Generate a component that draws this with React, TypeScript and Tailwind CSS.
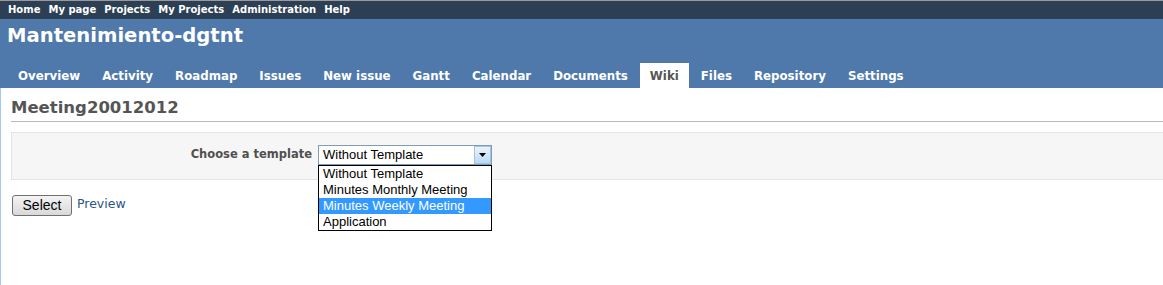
const topMenu = ["Home", "My page", "Projects", "My Projects", "Administration", "Help"];

const tabs = [
  "Overview",
  "Activity",
  "Roadmap",
  "Issues",
  "New issue",
  "Gantt",
  "Calendar",
  "Documents",
  "Wiki",
  "Files",
  "Repository",
  "Settings",
];

const templates = [
  "Without Template",
  "Minutes Monthly Meeting",
  "Minutes Weekly Meeting",
  "Application",
];

export default function App() {
  return (
    <div className="h-[285px] w-full overflow-hidden bg-white font-['DejaVu_Sans',sans-serif]">
      {/* top menu */}
      <div className="h-[19px] border-t border-[#9a9a9a] bg-[#2c3f54]">
        <div className="flex gap-[8px] pl-[8px] text-[10px] font-bold leading-[18px] text-white">
          {topMenu.map((item) => (
            <span key={item}>{item}</span>
          ))}
        </div>
      </div>

      {/* header */}
      <div className="flex h-[69px] flex-col bg-[#4f79aa]">
        <h1 className="pl-[7px] pt-[5px] text-[19.6px] font-bold leading-[24px] text-white">
          Mantenimiento-dgtnt
        </h1>
        <div className="mt-auto flex gap-[2px] pl-[8px]">
          {tabs.map((tab) =>
            tab === "Wiki" ? (
              <span
                key={tab}
                className="h-[25px] bg-white px-[10px] pt-[2px] text-[11.8px] font-bold leading-[23px] text-[#555]"
              >
                {tab}
              </span>
            ) : (
              <span
                key={tab}
                className="h-[25px] px-[10px] pt-[2px] text-[11.8px] font-bold leading-[23px] text-white"
              >
                {tab}
              </span>
            )
          )}
        </div>
      </div>

      {/* content */}
      <div className="h-[197px] w-[1200px] border-l border-[#a9c8ee] pl-[10px]">
        <h2 className="border-b border-[#bbb] pb-[3px] pt-[10px] text-[16.5px] font-bold leading-[20px] text-[#555]">
          Meeting20012012
        </h2>

        <div className="mt-[10px] h-[48px] border border-[#e4e4e4] bg-[#f6f6f6] pt-[12px]">
          <div className="flex items-center">
            <label className="w-[300px] text-right text-[11.5px] font-bold text-[#505050]">
              Choose a template
            </label>
            <div className="relative ml-[6px]">
              <div className="flex h-[20px] w-[174px] items-center border border-[#7f9db9] bg-white font-['Liberation_Sans',sans-serif] text-[13px] text-black">
                <span className="flex-1 pl-[4px] leading-[18px]">Without Template</span>
                <span className="flex h-[18px] w-[17px] items-center justify-center border border-[#a7c3de] bg-gradient-to-b from-[#eaf4fc] to-[#b9d9f5]">
                  <svg width="7" height="4" viewBox="0 0 7 4">
                    <path d="M0 0h7L3.5 4z" fill="#000" />
                  </svg>
                </span>
              </div>
              <div className="absolute left-0 top-[20px] z-10 w-[174px] border border-black bg-white font-['Liberation_Sans',sans-serif] text-[13px] text-black">
                {templates.map((t) =>
                  t === "Minutes Weekly Meeting" ? (
                    <div key={t} className="h-[16px] bg-[#3399ff] pl-[4px] leading-[16px] text-white">
                      {t}
                    </div>
                  ) : (
                    <div key={t} className="h-[16px] pl-[4px] leading-[16px]">
                      {t}
                    </div>
                  )
                )}
              </div>
            </div>
          </div>
        </div>

        <div className="ml-[1px] mt-[15px] flex items-start gap-[5px]">
          <button className="h-[21px] w-[60px] rounded-[3px] border border-[#707070] bg-gradient-to-b from-[#f4f4f4] to-[#d9d9d9] font-['Liberation_Sans',sans-serif] text-[14px] leading-[19px] text-black">
            Select
          </button>
          <a className="pt-[1px] text-[12.5px] leading-[16px] text-[#2a5685]">Preview</a>
        </div>
      </div>
    </div>
  );
}
